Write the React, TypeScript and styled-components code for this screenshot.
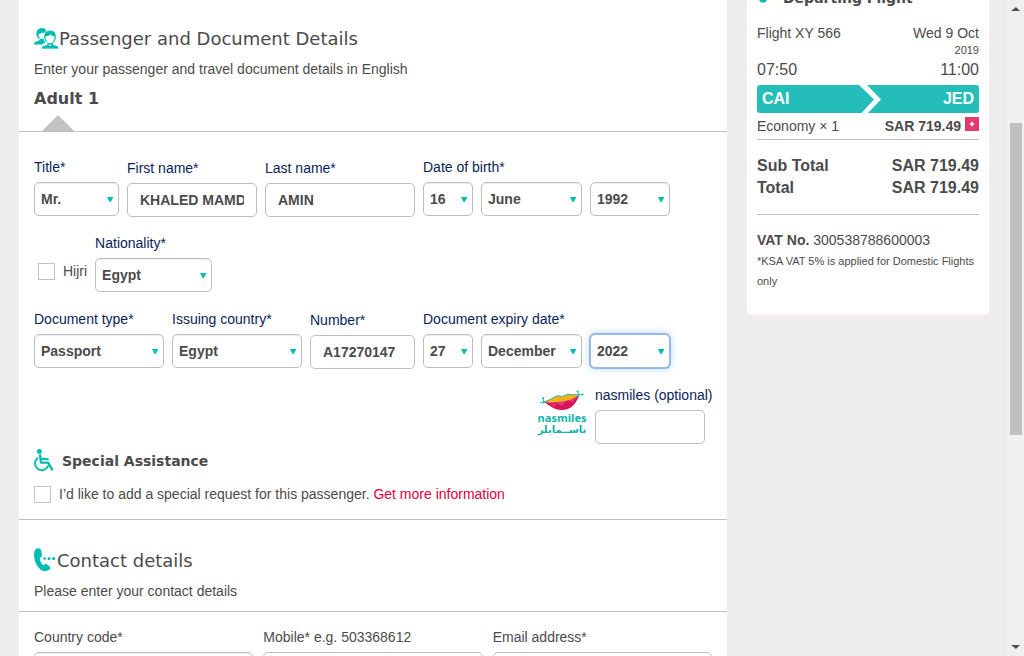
import React from "react";
import styled, { createGlobalStyle, css } from "styled-components";

const teal = "#00bdb3";
const ink = "#4c4b4b";
const navy = "#0a2458";
const rule = "#bebebe";

const GlobalStyle = createGlobalStyle`
  * { box-sizing: border-box; }
  body {
    margin: 0;
    background: #efedee;
    color: ${ink};
    font: 14px/20px "Liberation Sans", Arial, sans-serif;
  }
  h2, h3, p, dl, dd { margin: 0; }
`;

const Viewport = styled.div`
  display: flex;
  height: 100vh;
  overflow: hidden;
`;

const Page = styled.div`
  flex: 1;
  display: flex;
  align-items: flex-start;
  gap: 20px;
  padding: 0 18px 0 19px;
`;

const Main = styled.form`
  flex: 1;
  min-width: 0;
  background: #fff;
`;

const Intro = styled.section<{ $top: number; $bottom: number }>`
  padding: ${(p) => p.$top}px 15px ${(p) => p.$bottom}px;
  border-bottom: 1px solid ${rule};
`;

const Heading = styled.h2`
  display: flex;
  align-items: flex-start;
  margin-bottom: 7px;
  font: 400 18px/26px "DejaVu Sans", Verdana, sans-serif;
`;

const PassengerName = styled.h3`
  margin-top: 8px;
  font: 700 16px/24px "DejaVu Sans", Verdana, sans-serif;
`;

const Pointer = styled.div`
  width: 0;
  margin: 4px 0 0 8px;
  border: solid transparent;
  border-width: 0 16px 16px;
  border-bottom-color: #c3c3c1;
`;

const Details = styled.section`
  padding: 24px 15px 16px;
  border-bottom: 1px solid ${rule};
`;

const FieldRow = styled.div`
  display: flex;
  align-items: flex-start;
  gap: 8px;
  min-height: 76px;
`;

const SmilesRow = styled(FieldRow)`
  justify-content: flex-end;
  min-height: 64px;
`;

const FieldBox = styled.div<{ $width?: number; $text?: boolean; $plain?: boolean }>`
  display: flex;
  flex-direction: column;
  gap: 4px;
  width: ${(p) => (p.$width ? `${p.$width}px` : "auto")};
  padding-top: ${(p) => (p.$text ? 1 : 0)}px;
  color: ${(p) => (p.$plain ? ink : navy)};
`;

const Label = styled.label`
  line-height: 22px;
  white-space: nowrap;
`;

const control = css`
  width: 100%;
  height: 34px;
  border: 1px solid #bdbdbd;
  border-radius: 5px;
  background: #fff;
  color: ${ink};
  font: 700 14px/20px "Liberation Sans", Arial, sans-serif;
`;

const TextInput = styled.input`
  ${control}
  padding: 0 12px;
  outline: none;
`;

const SmilesInput = styled(TextInput)`
  width: 110px;
`;

const SelectWrap = styled.div<{ $width?: number }>`
  position: relative;
  width: ${(p) => (p.$width ? `${p.$width}px` : "100%")};
`;

const SelectInput = styled.select<{ $active?: boolean }>`
  ${control}
  display: block;
  appearance: none;
  padding: 0 18px 0 6px;
  outline: none;
  box-shadow: inset 0 1px 1px rgba(0, 0, 0, 0.07);
  ${(p) =>
    p.$active &&
    css`
      border-color: #a3b8d6;
      box-shadow: 0 0 0 1px #8ab8f8, 0 0 8px rgba(110, 180, 240, 0.6);
    `}
`;

const Arrow = styled.svg`
  position: absolute;
  top: 14px;
  right: 5px;
  pointer-events: none;
`;

const DateParts = styled.div`
  display: flex;
  gap: 8px;
`;

const Check = styled.input`
  appearance: none;
  width: 17px;
  height: 17px;
  margin: 0;
  border: 1px solid #c4c4c4;
  background: #fff;
`;

const CheckLine = styled.div`
  display: flex;
  align-items: center;
  gap: 8px;
  margin-top: 11px;
  line-height: 18px;
`;

const HijriLine = styled(CheckLine)`
  margin-top: 30px;
  padding-left: 4px;
`;

const MoreLink = styled.a`
  color: #e2003c;
  text-decoration: none;
`;

const Logo = styled.div`
  display: flex;
  flex-direction: column;
  align-items: center;
  width: 50px;
  padding-top: 6px;
  color: #0fb3aa;
  white-space: nowrap;
`;

const LogoLatin = styled.span`
  font: 700 11px/12px "Open Sans", sans-serif;
`;

const LogoArabic = styled.span`
  font: 700 10px/12px "DejaVu Sans", sans-serif;
`;

const AssistHeading = styled.h3`
  display: flex;
  align-items: flex-start;
  gap: 8px;
  font: 700 14px/26px "DejaVu Sans", Verdana, sans-serif;
`;

const ContactGrid = styled.section`
  display: grid;
  grid-template-columns: repeat(3, 1fr);
  gap: 10px;
  padding: 14px 15px 30px;
`;

const Summary = styled.aside`
  flex: 0 0 242px;
  margin-top: -40px;
  padding: 26px 10px 24px;
  border-radius: 4px;
  background: #fff;
`;

const SummaryHeading = styled.h2`
  display: flex;
  align-items: center;
  gap: 14px;
  padding-bottom: 13px;
  font: 700 14px/24px "DejaVu Sans", Verdana, sans-serif;
`;

const Split = styled.div`
  display: flex;
  justify-content: space-between;
  align-items: center;
`;

const Year = styled.div`
  font-size: 11px;
  line-height: 14px;
  text-align: right;
`;

const Times = styled(Split)`
  font-size: 16px;
  line-height: 26px;
  padding-bottom: 2px;
`;

const Route = styled.div`
  display: grid;
  grid-template-columns: 102px 22px 1fr;
  overflow: hidden;
  border-radius: 3px;
  background: #24bdb9;
  color: #fff;
  font-size: 16px;
  font-weight: 700;
  line-height: 28px;
`;

const Airport = styled.span<{ $end?: boolean }>`
  padding: 0 5px;
  text-align: ${(p) => (p.$end ? "right" : "left")};
`;

const Fare = styled(Split)`
  padding: 3px 0;
  border-bottom: 1px solid ${rule};
`;

const FarePrice = styled.span`
  display: flex;
  align-items: center;
  gap: 4px;
`;

const Expand = styled.button`
  display: grid;
  place-items: center;
  width: 14px;
  height: 14px;
  margin-bottom: 4px;
  padding: 0;
  border: 0;
  background: #e23a70;
`;

const Totals = styled.div`
  padding: 15px 0;
  border-bottom: 1px solid ${rule};
  font-size: 16px;
  font-weight: 700;
  line-height: 22px;
`;

const VatLine = styled.p`
  padding: 15px 0 1px;
`;

const Note = styled.p`
  font-size: 11px;
  line-height: 20px;
`;

const ScrollBar = styled.div`
  display: flex;
  flex-direction: column;
  flex: 0 0 17px;
  background: #f1f0f1;
`;

const Space = styled.div<{ $grow: number }>`
  flex: ${(p) => p.$grow};
`;

const Thumb = styled(Space)`
  margin: 0 2px 0 3px;
  background: #c0c0c0;
`;

function PeopleIcon() {
  return (
    <svg width="25" height="24" viewBox="0 0 25 24" aria-hidden="true">
      <path
        d="M2.700 10C1.600 6 3.600 2 7.700 2c2-.2 4.200 1 4.500 3.200l-2.400 2c-.6 4.600 0 7.200 1.600 9L8 18.400H0C.2 15.700 2 15.400 5.200 14.400L6 13C4 12.200 3.400 11.400 2.700 10z"
        fill={teal}
      />
      <path d="M4.400 8.200c1.800-.2 3-.9 3.800-2 .8 1 2 1.400 3 1.600-.7 3-1 5-3.200 5.200-2.400 0-3.500-2.300-3.600-4.800z" fill="#fff" />
      <path
        d="M7 23c0-3 2.600-3.500 5.800-4.300l.6-1.500c-2.700-1.400-3.800-3.700-3.600-6.600.2-4.200 2.600-6.400 6.400-6.400 3.800 0 6 2.300 6 6.200 0 3.200-1 5.700-3.200 6.900l.5 1.400c3 .7 5.500 1.300 5.500 4.300z"
        fill={teal}
        stroke="#fff"
        strokeWidth="0.8"
      />
      <path d="M11.400 10.500c2.400-.3 4-.9 5.200-2.200 1 1.500 2.600 2.100 4 2.200-.1 4-1.800 6.800-4.600 6.800s-4.500-3-4.600-6.800z" fill="#fff" />
      <path d="M14 18.800l2 1.500 2-1.500z" fill="#fff" />
    </svg>
  );
}

function PhoneIcon() {
  return (
    <svg width="23" height="24" viewBox="0 0 23 24" aria-hidden="true">
      <path
        d="M3.700.2C1 .5-.3 3.700.1 8.200.6 14.500 4 20.800 8.800 22.800c2.200.9 5.200.2 7.200-1.700.8-.8.5-1.900-.4-2.700l-2.300-1.800c-.9-.7-1.900-.6-2.800 0l-1.200.7C7.400 15.700 6 13 5.700 10.200l1.100-.8c.9-.6 1.300-1.500 1.100-2.500L7.400 3C7.100 1.200 5.800 0 3.700.2z"
        fill={teal}
      />
      <circle cx="10.600" cy="10.500" r="1.300" fill={teal} />
      <circle cx="15" cy="10.500" r="1.500" fill={teal} />
      <circle cx="19.500" cy="10.500" r="1.600" fill={teal} />
    </svg>
  );
}

function WheelchairIcon() {
  return (
    <svg width="20" height="24" viewBox="0 0 20 24" fill="none" aria-hidden="true">
      <circle cx="5.400" cy="3.600" r="2.500" fill={teal} />
      <path d="M6 7.400l1 7.200h7.200l3.800 6.800" stroke={teal} strokeWidth="2.400" strokeLinecap="round" strokeLinejoin="round" />
      <path d="M7 10.800l7 .4" stroke={teal} strokeWidth="1.900" strokeLinecap="round" />
      <path d="M3.400 10.200a6.800 6.800 0 1 0 10.600 8" stroke={teal} strokeWidth="2" strokeLinecap="round" />
    </svg>
  );
}

function SmileArt() {
  return (
    <svg width="44" height="22" viewBox="0 0 44 22" aria-hidden="true">
      <path d="M4 12C10 10 14 7 17 6c2-.6 3.500 0 5 1 1.500-1.500 4-2.500 6-2.500C32 4.500 36 5 39 5c-5 4-9 5-14 6-6 1.200-14 2-21 1z" fill="#fbb016" />
      <path d="M4 12c7 1 15 .2 21-1s9-2 14-6c-2 7-7 14.500-16 15C14 20.500 9 15 4 12z" fill="#d4145a" />
      <path d="M16 13l6 3 5-5.500zM27 11l6 1 4-6zM10 14.500l5 3 1-4z" fill="#f0517f" opacity=".55" />
      <path
        d="M0 12.500l4-.5C10 10 14 7 17 6c2-.6 3.500 0 5 1 1.500-1.500 4-2.500 6-2.500C32 4.500 36 5 43 4.500M3 8.500l1 3.500-1 2M37.500 1L39 5l-1 3"
        stroke="#0fb3aa"
        strokeWidth="0.900"
        fill="none"
      />
      <circle cx="3" cy="8" r="1" fill="#0fb3aa" />
      <circle cx="37.500" cy="1.500" r="1" fill="#0fb3aa" />
      <circle cx="42.500" cy="4.500" r="1" fill="#0fb3aa" />
    </svg>
  );
}

type PickProps = { id: string; value: string; width?: number; active?: boolean; name?: string };

function Pick({ id, value, width, active, name }: PickProps) {
  return (
    <SelectWrap $width={width}>
      <SelectInput id={id} aria-label={name} $active={active} defaultValue={value}>
        <option value={value}>{value}</option>
      </SelectInput>
      <Arrow width="7" height="7" viewBox="0 0 7 7" aria-hidden="true">
        <path d="M0 1h6.400L3.800 6H2.600z" fill={teal} />
      </Arrow>
    </SelectWrap>
  );
}

type FieldProps = { id: string; label: string; value?: string; width?: number; plain?: boolean };

function SelectField({ id, label, value = "", width, plain }: FieldProps) {
  return (
    <FieldBox $width={width} $plain={plain}>
      <Label htmlFor={id}>{label}</Label>
      <Pick id={id} value={value} />
    </FieldBox>
  );
}

function TextField({ id, label, value, width, plain }: FieldProps) {
  return (
    <FieldBox $width={width} $text={!plain} $plain={plain}>
      <Label htmlFor={id}>{label}</Label>
      <TextInput id={id} defaultValue={value} />
    </FieldBox>
  );
}

type DateProps = { id: string; label: string; day: string; month: string; year: string; active?: boolean };

function DateField({ id, label, day, month, year, active }: DateProps) {
  return (
    <FieldBox>
      <Label htmlFor={`${id}-day`}>{label}</Label>
      <DateParts>
        <Pick id={`${id}-day`} value={day} width={50} />
        <Pick id={`${id}-month`} name={`${label} month`} value={month} width={101} />
        <Pick id={`${id}-year`} name={`${label} year`} value={year} width={80} active={active} />
      </DateParts>
    </FieldBox>
  );
}

export default function App() {
  return (
    <>
      <GlobalStyle />
      <Viewport>
        <Page>
          <Main>
            <Intro $top={26} $bottom={0}>
              <Heading>
                <PeopleIcon />
                Passenger and Document Details
              </Heading>
              <p>Enter your passenger and travel document details in English</p>
              <PassengerName>Adult 1</PassengerName>
              <Pointer />
            </Intro>

            <Details>
              <FieldRow>
                <SelectField id="title" label="Title*" value="Mr." width={85} />
                <TextField id="first" label="First name*" value="KHALED MAMDOUH" width={130} />
                <TextField id="last" label="Last name*" value="AMIN" width={150} />
                <DateField id="birth" label="Date of birth*" day="16" month="June" year="1992" />
              </FieldRow>
              <FieldRow>
                <HijriLine>
                  <Check type="checkbox" id="hijri" />
                  <label htmlFor="hijri">Hijri</label>
                </HijriLine>
                <SelectField id="nationality" label="Nationality*" value="Egypt" width={117} />
              </FieldRow>
              <FieldRow>
                <SelectField id="doctype" label="Document type*" value="Passport" width={130} />
                <SelectField id="issuer" label="Issuing country*" value="Egypt" width={130} />
                <TextField id="number" label="Number*" value="A17270147" width={105} />
                <DateField id="expiry" label="Document expiry date*" day="27" month="December" year="2022" active />
              </FieldRow>
              <SmilesRow>
                <Logo>
                  <SmileArt />
                  <LogoLatin>nasmiles</LogoLatin>
                  <LogoArabic lang="ar" dir="rtl">ناســمايلز</LogoArabic>
                </Logo>
                <FieldBox $width={117}>
                  <Label htmlFor="nasmiles">nasmiles (optional)</Label>
                  <SmilesInput id="nasmiles" />
                </FieldBox>
              </SmilesRow>
              <AssistHeading>
                <WheelchairIcon />
                Special Assistance
              </AssistHeading>
              <CheckLine>
                <Check type="checkbox" id="assist" />
                <span>
                  <label htmlFor="assist">I’d like to add a special request for this passenger.</label>{" "}
                  <MoreLink href="#assistance">Get more information</MoreLink>
                </span>
              </CheckLine>
            </Details>

            <Intro $top={28} $bottom={10}>
              <Heading>
                <PhoneIcon />
                Contact details
              </Heading>
              <p>Please enter your contact details</p>
            </Intro>
            <ContactGrid>
              <SelectField id="country" label="Country code*" plain />
              <TextField id="mobile" label="Mobile* e.g. 503368612" plain />
              <TextField id="email" label="Email address*" plain />
            </ContactGrid>
          </Main>

          <Summary>
            <SummaryHeading>
              <svg width="12" height="12" viewBox="0 0 12 12" aria-hidden="true">
                <path d="M0 0h12v5.500L8 10.500H4L0 5.500z" fill={teal} />
              </svg>
              Departing Flight
            </SummaryHeading>
            <Split>
              <span>Flight XY 566</span>
              <span>Wed 9 Oct</span>
            </Split>
            <Year>2019</Year>
            <Times>
              <span>07:50</span>
              <span>11:00</span>
            </Times>
            <Route>
              <Airport>CAI</Airport>
              <svg width="22" height="28" viewBox="0 0 22 28" aria-hidden="true">
                <path d="M0 0h8l14 14.500L9 28H2.500L15 14.500z" fill="#fff" />
              </svg>
              <Airport $end>JED</Airport>
            </Route>
            <Fare>
              <span>Economy × 1</span>
              <FarePrice>
                <strong>SAR 719.49</strong>
                <Expand type="button" aria-label="Show fare breakdown">
                  <svg width="6" height="6" viewBox="0 0 6 6" aria-hidden="true">
                    <path d="M3 .8v4.400M.8 3h4.400" stroke="#fff" strokeWidth="1.600" />
                  </svg>
                </Expand>
              </FarePrice>
            </Fare>
            <Totals>
              <Split>
                <span>Sub Total</span>
                <span>SAR 719.49</span>
              </Split>
              <Split>
                <span>Total</span>
                <span>SAR 719.49</span>
              </Split>
            </Totals>
            <VatLine>
              <strong>VAT No.</strong> 300538788600003
            </VatLine>
            <Note>*KSA VAT 5% is applied for Domestic Flights only</Note>
          </Summary>
        </Page>

        <ScrollBar aria-hidden="true">
          <svg width="17" height="17" viewBox="0 0 17 17">
            <path d="M4 11l5-4 4 4z" fill="#4f4f4f" />
          </svg>
          <Space $grow={106} />
          <Thumb $grow={312} />
          <Space $grow={204} />
          <svg width="17" height="17" viewBox="0 0 17 17">
            <path d="M4 6l5 4 4-4z" fill="#4f4f4f" />
          </svg>
        </ScrollBar>
      </Viewport>
    </>
  );
}
